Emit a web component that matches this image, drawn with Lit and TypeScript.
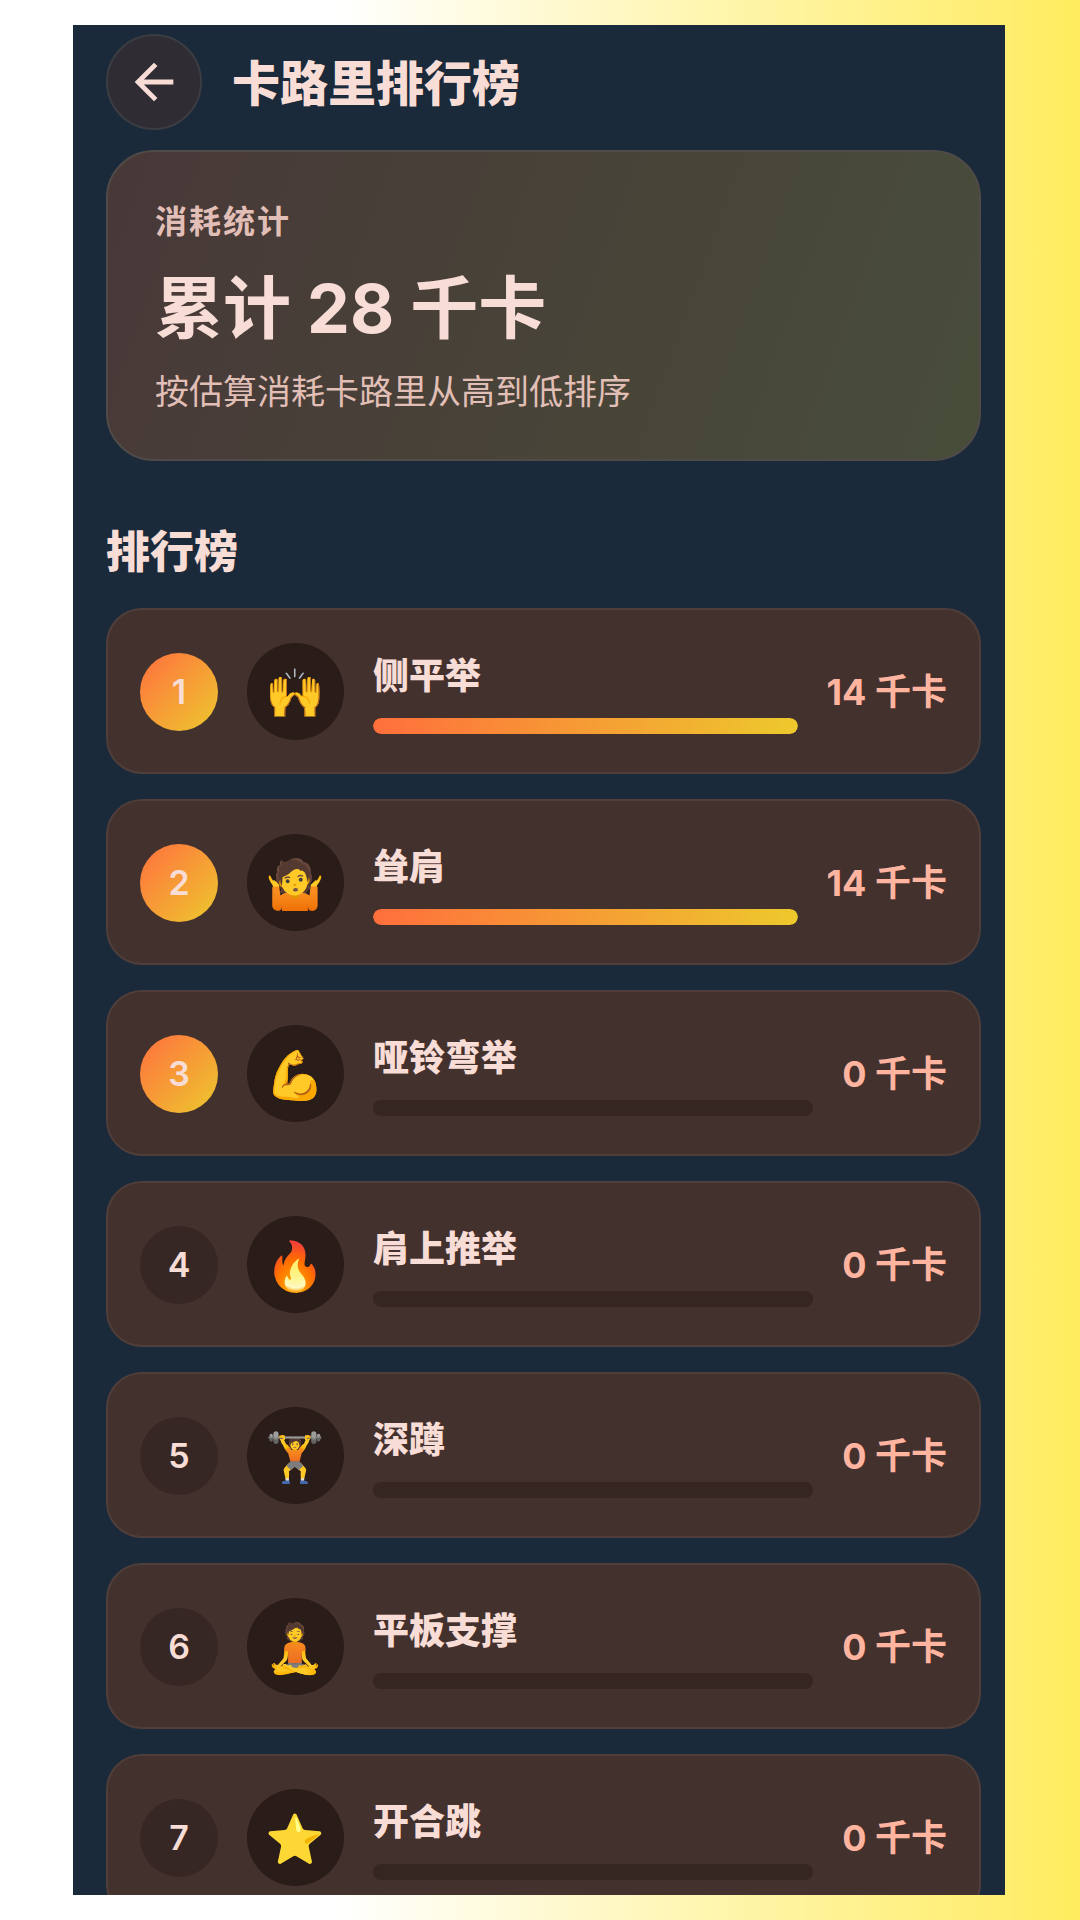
import { LitElement, html, css } from "lit";
import { customElement, property } from "lit/decorators.js";
import { classMap } from "lit/directives/class-map.js";
import { styleMap } from "lit/directives/style-map.js";

interface Exercise {
  name: string;
  emoji: string;
  kcal: number;
}

const EXERCISES: Exercise[] = [
  { name: "侧平举", emoji: "🙌", kcal: 14 },
  { name: "耸肩", emoji: "🤷", kcal: 14 },
  { name: "哑铃弯举", emoji: "💪", kcal: 0 },
  { name: "肩上推举", emoji: "🔥", kcal: 0 },
  { name: "深蹲", emoji: "🏋️", kcal: 0 },
  { name: "平板支撑", emoji: "🧘", kcal: 0 },
  { name: "开合跳", emoji: "⭐", kcal: 0 },
];

@customElement("rank-row")
export class RankRow extends LitElement {
  @property({ type: Number }) rank = 0;
  @property({ type: Number }) max = 1;
  @property({ attribute: false }) exercise!: Exercise;

  static styles = css`
    :host {
      display: block;
    }
    .row {
      display: flex;
      align-items: center;
      gap: 29px;
      padding: 33px 32px 32px;
      border: 2px solid #4f3e3a;
      border-radius: 36px;
      background: #43312e;
    }
    .badge,
    .emoji {
      flex: none;
      box-sizing: border-box;
      display: flex;
      align-items: center;
      justify-content: center;
      border-radius: 50%;
    }
    .badge {
      width: 78px;
      height: 78px;
      background: #362724;
      color: #f8ddd6;
      font-size: 34px;
      font-weight: 600;
    }
    .top {
      background: linear-gradient(135deg, #ff6f3f, #edc92d);
    }
    .emoji {
      width: 97px;
      height: 97px;
      padding-top: 4px;
      background: #2a1c19;
      font-family: "Noto Color Emoji", sans-serif;
      font-size: 48px;
    }
    .info {
      flex: 1;
      min-width: 0;
      display: flex;
      flex-direction: column;
      gap: 16px;
    }
    .name {
      color: #f8ddd6;
      font-size: 36px;
      line-height: 52px;
      font-weight: 900;
    }
    .track {
      height: 16px;
      border-radius: 8px;
      background: #352622;
      overflow: hidden;
    }
    .fill {
      height: 100%;
      border-radius: 8px;
      background: linear-gradient(90deg, #ff6f3c, #edc92d);
    }
    .value {
      flex: none;
      color: #ffb4a0;
      font-size: 36px;
      line-height: 52px;
      font-weight: 700;
    }
  `;

  render() {
    const { name, emoji, kcal } = this.exercise;
    const width = `${(kcal / this.max) * 100}%`;
    return html`
      <div class="row">
        <span class=${classMap({ badge: true, top: this.rank <= 3 })}>${this.rank}</span>
        <span class="emoji">${emoji}</span>
        <div class="info">
          <span class="name">${name}</span>
          <div class="track"><div class="fill" style=${styleMap({ width })}></div></div>
        </div>
        <span class="value">${kcal} 千卡</span>
      </div>
    `;
  }
}

@customElement("app-root")
export class AppRoot extends LitElement {
  static styles = css`
    :host {
      display: block;
      box-sizing: border-box;
      height: 100vh;
      padding: 25px 75px 25px 73px;
      background: linear-gradient(90deg, #ffffff 31%, #ffee70 93%, #ffed5e);
      font-family: Inter, "Noto Sans CJK SC", sans-serif;
    }
    .screen {
      box-sizing: border-box;
      height: 100%;
      padding: 9px 24px 0 33px;
      overflow: hidden;
      background: #1a2a3a;
      color: #f8ddd6;
    }
    .header {
      display: flex;
      align-items: center;
      gap: 30px;
      margin-bottom: 20px;
    }
    .back {
      flex: none;
      box-sizing: border-box;
      display: flex;
      align-items: center;
      justify-content: center;
      width: 96px;
      height: 96px;
      padding: 0;
      border: 2px solid #3b3d43;
      border-radius: 50%;
      background: #2f2d33;
      color: inherit;
    }
    .arrow {
      width: 58px;
      height: 58px;
      fill: currentColor;
    }
    .title {
      margin: 0;
      padding-top: 4px;
      font-size: 48px;
      line-height: 64px;
      font-weight: 900;
    }
    .summary {
      display: flex;
      flex-direction: column;
      gap: 18px;
      padding: 48px 47px 47px;
      border: 2px solid #504b48;
      border-radius: 48px;
      background: linear-gradient(110deg, #483838, #484338 50%, #484d3a) border-box;
    }
    .label,
    .total,
    .note {
      margin: 0;
    }
    .label {
      color: #e2bfb6;
      font-size: 32px;
      line-height: 44px;
      font-weight: 700;
      letter-spacing: 2px;
    }
    .total {
      font-size: 68px;
      line-height: 92px;
      font-weight: 700;
    }
    .note {
      color: #e2bfb6;
      font-size: 34px;
      line-height: 40px;
    }
    .section {
      margin: 59px 0 24px;
      font-size: 44px;
      line-height: 64px;
      font-weight: 900;
    }
    .list {
      display: flex;
      flex-direction: column;
      gap: 25px;
      margin: 0;
      padding: 0;
      list-style: none;
    }
  `;

  render() {
    const total = EXERCISES.reduce((sum, e) => sum + e.kcal, 0);
    const max = Math.max(...EXERCISES.map((e) => e.kcal));
    return html`
      <main class="screen">
        <header class="header">
          <button class="back" type="button" aria-label="返回">
            <svg class="arrow" viewBox="0 0 24 24" aria-hidden="true">
              <path d="M20 11H7.83l5.59-5.59L12 4l-8 8 8 8 1.41-1.41L7.83 13H20v-2z" />
            </svg>
          </button>
          <h1 class="title">卡路里排行榜</h1>
        </header>
        <section class="summary">
          <p class="label">消耗统计</p>
          <p class="total">累计 ${total} 千卡</p>
          <p class="note">按估算消耗卡路里从高到低排序</p>
        </section>
        <h2 class="section">排行榜</h2>
        <ol class="list">
          ${EXERCISES.map(
            (exercise, i) => html`
              <li><rank-row .exercise=${exercise} .rank=${i + 1} .max=${max}></rank-row></li>
            `,
          )}
        </ol>
      </main>
    `;
  }
}
